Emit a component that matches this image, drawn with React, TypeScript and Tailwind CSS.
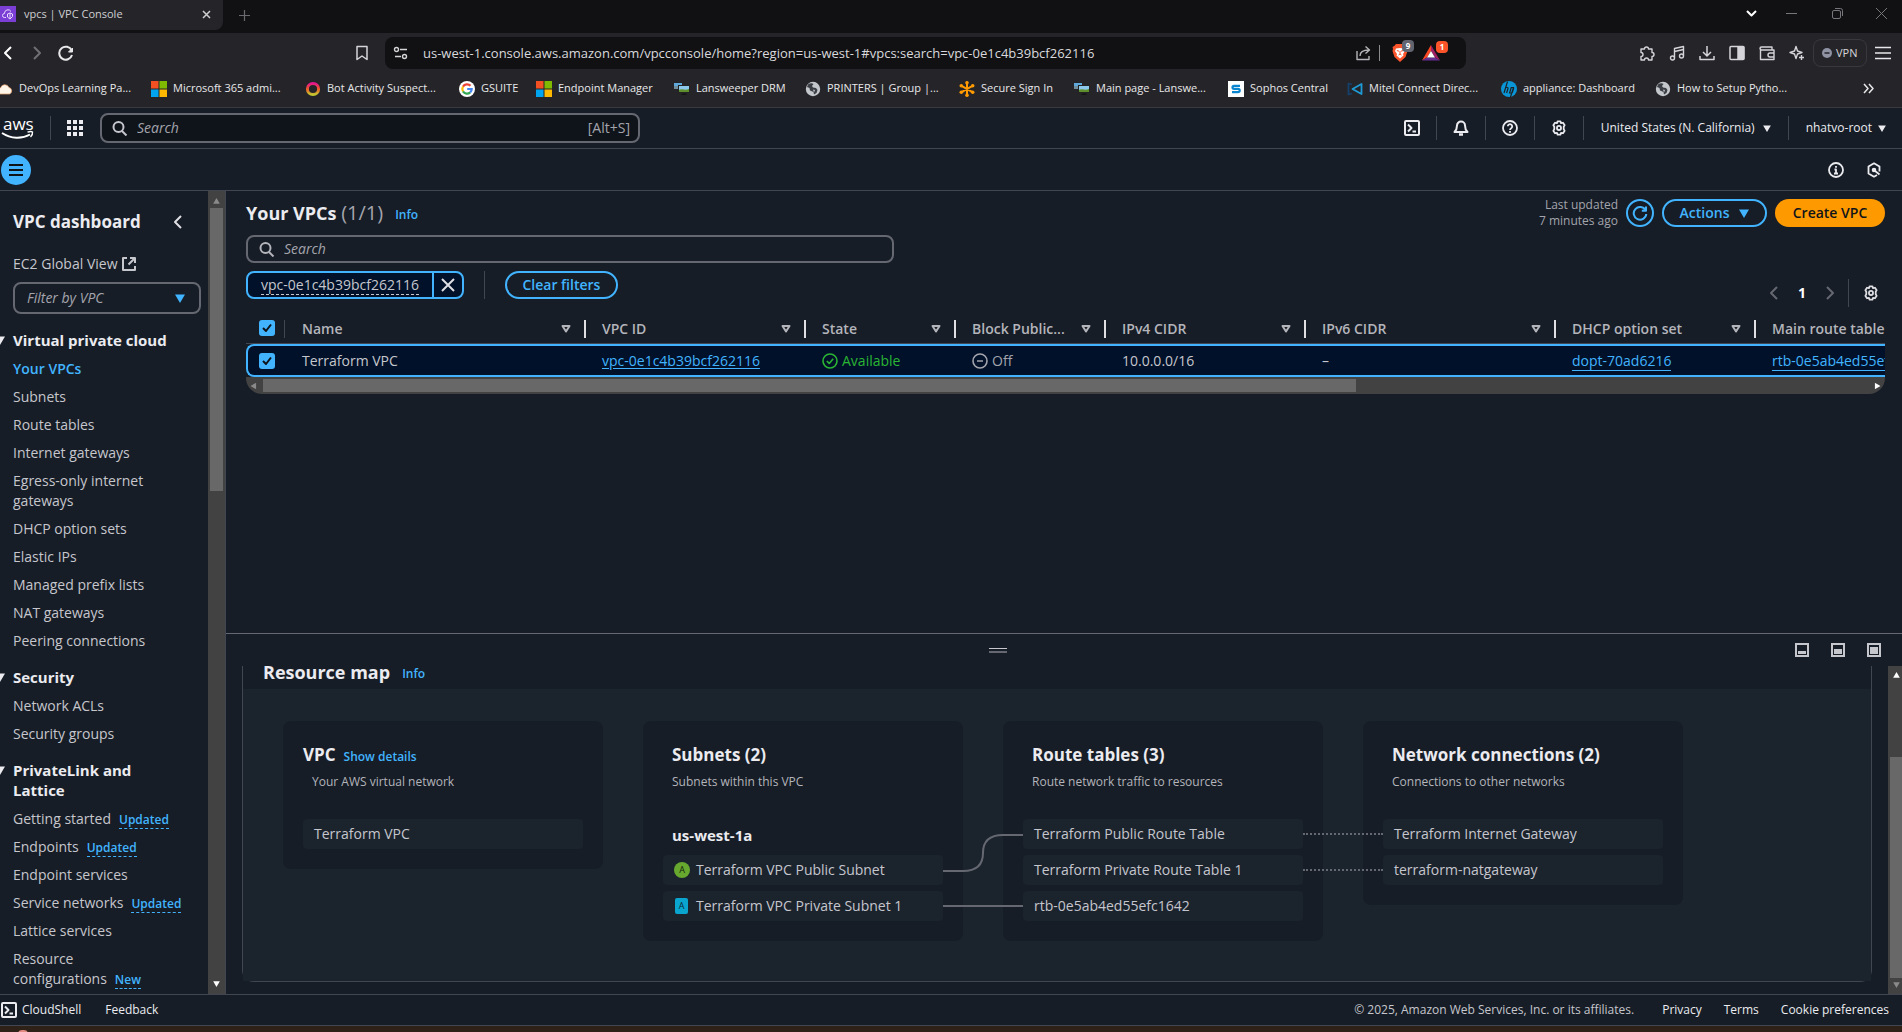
import type { ReactNode } from "react";

type P = { className?: string };

function Icon({ children, size = 16, className = "", box = "0 0 16 16", sw = 2 }: { children: ReactNode; size?: number; className?: string; box?: string; sw?: number }) {
  return (
    <svg width={size} height={size} viewBox={box} fill="none" stroke="currentColor" strokeWidth={sw} strokeLinejoin="round" className={"shrink-0 " + className} aria-hidden="true">
      {children}
    </svg>
  );
}

/* ---------- shared console icons ---------- */
const SearchIcon = ({ className }: P) => (
  <Icon className={className}><circle cx="6.5" cy="7" r="5" /><path d="m10 11 4.500 4.500" /></Icon>
);
const GearIcon = ({ className }: P) => (
  <Icon className={className} size={18} box="0 0 18 18">
    <path d="M7.400 1.500h3.200l.7 2.100 2.200-.5 1.900 2.700L14.300 7.600v2.800l1.100 1.800-1.900 2.700-2.200-.5-.7 2.100H7.400l-.7-2.100-2.200.5-1.900-2.700 1.100-1.800V7.600L2.600 5.800l1.900-2.700 2.200.5Z" />
    <circle cx="9" cy="9" r="2.3" />
  </Icon>
);
const ShellIcon = ({ className }: P) => (
  <Icon className={className}><rect x="1" y="1" width="14" height="14" rx="1" /><path d="m4 4.500 3.500 3.500L4 11.500M8.500 11.500H12" /></Icon>
);
const Caret = ({ className, w = 10 }: P & { w?: number }) => (
  <svg width={w} height={w - 1} viewBox="0 0 10 9" fill="currentColor" className={"shrink-0 " + className} aria-hidden="true"><path d="M0 .5h10L5 9Z" /></svg>
);
const SortIcon = () => (
  <Icon size={10} box="0 0 10 9" className="text-[#b4b4bb]"><path d="M1.5 1.500h7L5 7Z" /></Icon>
);
const ChevronLeft = ({ className }: P) => <Icon className={className}><path d="m11 2-6 6 6 6" /></Icon>;
const ChevronRight = ({ className }: P) => <Icon className={className}><path d="m5 2 6 6-6 6" /></Icon>;

/* ---------- bookmark icons ---------- */
const Microsoft = () => (
  <svg width="16" height="16" viewBox="0 0 16 16" className="shrink-0"><path fill="#f25022" d="M0 0h7.500v7.500H0z" /><path fill="#7fba00" d="M8.500 0H16v7.500H8.500z" /><path fill="#00a4ef" d="M0 8.500h7.500V16H0z" /><path fill="#ffb900" d="M8.500 8.500H16V16H8.500z" /></svg>
);
const Globe = () => (
  <svg width="16" height="16" viewBox="0 0 16 16" className="shrink-0"><circle cx="8" cy="8" r="7.2" fill="#c4c7cc" /><path d="M3 3.500c2-1.600 4.500-1.500 5.500-.5L7 5l1 1.500 3 .5 1.500 2-1 3-2.500 1.500L8.500 11 5 9.500 4.500 7 2 6Z" fill="#3b3e44" /><path d="M8 8.500 10 9l-1 2.500Z" fill="#c4c7cc" /></svg>
);
const Lansweeper = () => (
  <svg width="16" height="16" viewBox="0 0 16 16" className="shrink-0"><rect x="0" y="2" width="8" height="6" fill="#6f8d9c" /><path d="M0 2h8v3H0z" fill="#5fa8dc" /><rect x="4" y="4" width="11.500" height="8" fill="#222" /><rect x="5" y="5" width="10" height="4" fill="#8cc8ec" /><path d="M5 9c3-2 6 1 10-1v3H5z" fill="#5f8f2c" /><path d="M8 12.500h4l1 1.500H7z" fill="#151515" /></svg>
);
const Cloud = () => (
  <svg width="16" height="16" viewBox="0 0 16 16" className="shrink-0"><path d="M3 13a3 3 0 0 1 .5-6A4.500 4.500 0 0 1 12 6.500 3.400 3.400 0 0 1 12.500 13Z" fill="#fff4e8" stroke="#e8a06a" strokeWidth=".7" /></svg>
);
const Ring = () => (
  <svg width="16" height="16" viewBox="0 0 16 16" className="shrink-0"><defs><linearGradient id="ring" x1="0" y1="0" x2="0" y2="1"><stop offset="0" stopColor="#e5168c" /><stop offset=".5" stopColor="#f05a28" /><stop offset="1" stopColor="#c3c72e" /></linearGradient></defs><circle cx="8" cy="8" r="5.600" fill="none" stroke="url(#ring)" strokeWidth="3" /></svg>
);
const Google = () => (
  <svg width="16" height="16" viewBox="0 0 16 16" className="shrink-0"><circle cx="8" cy="8" r="8" fill="#fff" /><g fill="none" strokeWidth="2.200"><path d="M11.500 4.800A4.700 4.700 0 0 0 4 5.600" stroke="#ea4335" /><path d="M4 5.600a4.700 4.700 0 0 0 0 4.800" stroke="#fbbc05" /><path d="M4 10.400a4.700 4.700 0 0 0 7.200 1" stroke="#34a853" /><path d="M11.200 11.400A4.700 4.700 0 0 0 12.700 8H8.200" stroke="#4285f4" /></g></svg>
);
const Asterisk = () => (
  <svg width="16" height="16" viewBox="0 0 16 16" className="shrink-0"><g stroke="#ff9a00" strokeWidth="2" strokeLinecap="round"><path d="M8 1.500v13M2.500 4.800l11 6.400M13.500 4.800l-11 6.400" /></g><g fill="#ff9a00"><circle cx="8" cy="1.800" r="1.800" /><circle cx="8" cy="14.200" r="1.800" /><circle cx="2.300" cy="4.700" r="1.800" /><circle cx="13.700" cy="4.700" r="1.800" /><circle cx="2.300" cy="11.300" r="1.800" /><circle cx="13.700" cy="11.300" r="1.800" /></g></svg>
);
const Sophos = () => (
  <svg width="16" height="16" viewBox="0 0 16 16" className="shrink-0"><path fill="#fff" d="M0 0h16v16H0z" /><path d="M12 4.800H6a1.500 1.500 0 0 0 0 3h4a1.600 1.600 0 0 1 0 3.400H4" fill="none" stroke="#0a86d1" strokeWidth="2.200" /></svg>
);
const Mitel = () => (
  <svg width="16" height="16" viewBox="0 0 16 16" className="shrink-0" fill="none" strokeWidth="1.800" strokeLinejoin="round"><path d="M5 3.500 1.500 2.500v11L5 12.500" stroke="#14406b" /><path d="M14.500 3v10L5.500 8Z" stroke="#1e9bd7" /></svg>
);
const Hp = () => (
  <svg width="16" height="16" viewBox="0 0 16 16" className="shrink-0"><circle cx="8" cy="8" r="8" fill="#0a96d6" /><g stroke="#1d2226" strokeWidth="1.200" fill="none"><path d="M6.500.5 3 12M4.500 6.500h1.800q1 0 .7 1L5.600 12M9.500 16l3-9.500h-2.300L8.600 12h1.800q.8 0 1.100-1l1.200-4" /></g></svg>
);

const bookmarks: { t: string; i: () => ReactNode; w: string }[] = [
  { t: "DevOps Learning Pa...", i: Cloud, w: "w-[154px]" },
  { t: "Microsoft 365 admi...", i: Microsoft, w: "w-[154px]" },
  { t: "Bot Activity Suspect...", i: Ring, w: "w-[154px]" },
  { t: "GSUITE", i: Google, w: "w-[77px]" },
  { t: "Endpoint Manager", i: Microsoft, w: "w-[138px]" },
  { t: "Lansweeper DRM", i: Lansweeper, w: "w-[131px]" },
  { t: "PRINTERS | Group |...", i: Globe, w: "w-[154px]" },
  { t: "Secure Sign In", i: Asterisk, w: "w-[115px]" },
  { t: "Main page - Lanswe...", i: Lansweeper, w: "w-[154px]" },
  { t: "Sophos Central", i: Sophos, w: "w-[119px]" },
  { t: "Mitel Connect Direc...", i: Mitel, w: "w-[154px]" },
  { t: "appliance: Dashboard", i: Hp, w: "w-[154px]" },
  { t: "How to Setup Pytho...", i: Globe, w: "w-[154px]" },
];

const box30 = "grid w-[30px] shrink-0 place-items-center text-[#d5d5d9]";

function BrowserChrome() {
  return (
    <div className="shrink-0 bg-[#252529] text-[#e8e8ea]">
      <div className="flex h-[33px] items-start justify-between bg-[#111113]">
        <div className="flex items-center">
          <div className="flex h-[30px] w-[223px] items-center gap-2 rounded-br-lg bg-[#252529] pr-2 pb-[2px] text-[11px] text-[#cfcfd2]">
            <svg width="16" height="16" viewBox="0 0 16 16" className="shrink-0"><path fill="#7b3fd6" d="M0 0h16v16H0z" /><path d="M6 11.500H4.500a2 2 0 0 1 0-4A3.500 3.500 0 0 1 11 5.500M7.500 8l2.500-1 2.500 1v2.500L10 13l-2.500-2ZM10 7v5" stroke="#e9dcff" fill="none" /></svg>
            <span className="flex-1">vpcs | VPC Console</span>
            <button aria-label="Close tab" className="p-1"><Icon size={9} box="0 0 9 9" sw={1.5}><path d="m1 1 7 7M8 1 1 8" /></Icon></button>
          </div>
          <button aria-label="New tab" className="px-4 text-[#6a6a6e]"><Icon size={11} box="0 0 11 11" sw={1.2}><path d="M5.500 0v11M0 5.500h11" /></Icon></button>
        </div>
        <div className="flex h-[26px] items-center text-[#77777b]">
          <button aria-label="Search tabs" className="grid w-[34px] place-items-center text-white"><Icon size={11} box="0 0 11 11"><path d="m1 3 4.500 4.500L10 3" /></Icon></button>
          <button aria-label="Minimize" className="grid w-[46px] place-items-center"><Icon size={11} box="0 0 11 11" sw={1}><path d="M0 5.500h11" /></Icon></button>
          <button aria-label="Restore" className="grid w-[46px] place-items-center"><Icon size={11} box="0 0 11 11" sw={1}><rect x=".5" y="2.500" width="8" height="8" rx="1.500" /><path d="M3 .5h5.500a2 2 0 0 1 2 2V8" /></Icon></button>
          <button aria-label="Close" className="grid w-[42px] place-items-center"><Icon size={11} box="0 0 11 11" sw={1}><path d="m0 0 11 11M11 0 0 11" /></Icon></button>
        </div>
      </div>

      <div className="flex h-10 items-center">
        <div className="flex w-[346px] shrink-0">
          <button aria-label="Back" className="w-[29px]"><ChevronLeft className="text-white" /></button>
          <button aria-label="Forward" className="w-[29px]"><ChevronRight className="text-[#6f6f74]" /></button>
          <button aria-label="Reload" className="w-[20px]"><Icon><path d="M13.700 5.500A6.500 6.500 0 1 0 14 10" /><path d="M14.500 3v4h-4Z" fill="currentColor" strokeWidth="1" /></Icon></button>
        </div>
        <button aria-label="Bookmark this page" className="w-[39px] pl-2 text-[#d5d5d9]"><Icon sw={1.5}><path d="M3 1.500h10v13L8 11l-5 3.500Z" /></Icon></button>
        <div className="flex h-8 min-w-0 flex-1 items-center rounded-lg bg-[#111113] pl-2">
          <Icon sw={1.4} className="text-[#d5d5d9]"><circle cx="3.500" cy="4.500" r="2" /><path d="M7 4.500h7M2 11.500h6" /><circle cx="11.500" cy="11.500" r="2" /></Icon>
          <label htmlFor="url" className="sr-only">Address</label>
          <input id="url" readOnly className="ml-[14px] h-6 min-w-0 flex-1 bg-transparent text-[13px] text-[#d9d9dd]" value="us-west-1.console.aws.amazon.com/vpcconsole/home?region=us-west-1#vpcs:search=vpc-0e1c4b39bcf262116" />
          <button aria-label="Share" className="text-[#b5b5ba]"><Icon sw={1.4}><path d="M2 6v8.500h12V11" /><path d="M5 11c0-4 3-6 9-6M10.500 1.500 14.500 5l-4 3.500" /></Icon></button>
          <span className="mx-2 h-4 w-px bg-[#8c8c90]" />
          <button aria-label="Brave Shields" className="relative w-[34px] pl-1">
            <svg width="16" height="18" viewBox="0 0 16 18"><path d="M4 0h8l1.500 1.700L15.500 3 15 5l.5 2-2 6L8 18l-5.500-5L.5 7 1 5 .5 3l2-1.300Z" fill="#fb542b" /><path d="M4 4.500 8 4l4 .5 1 2.500-2 3 .5 1.500L8 14.500 4.500 11.500 5 10 3 7Z" fill="#fff" /><path d="M4.800 6.500 7 7.200M11.200 6.500 9 7.200M8 7v3M6.500 11 8 10l1.500 1" stroke="#fb542b" strokeWidth="1" fill="none" /></svg>
            <span className="absolute -top-1 left-[14px] grid size-3 place-items-center rounded bg-[#62656f] text-[8px] leading-none font-bold text-white">9</span>
          </button>
          <button aria-label="Brave Rewards" className="relative mr-5 w-[24px]">
            <svg width="18" height="16" viewBox="0 0 18 16"><path d="M9 0 0 15.500 5 12.500 9 6Z" fill="#ff4724" /><path d="M9 0v6l4 6.500 5 3Z" fill="#9e1f63" /><path d="m0 15.500 5-3h8l5 3Z" fill="#662d91" /><path d="M9 6 5 12.500h8Z" fill="#fff" /></svg>
            <span className="absolute -top-1 left-[14px] grid size-3 place-items-center rounded bg-[#fb542b] text-[8px] leading-none font-bold text-white">1</span>
          </button>
        </div>
        <div className="ml-[166px] flex items-center">
          <button aria-label="Extensions" className={box30}><Icon sw={1.4}><path d="M2 4h3.500a2 2 0 1 1 4 0H13v3.500a2 2 0 1 1 0 4V15H9.500a2 2 0 0 0-4 0H2v-3.500a2 2 0 0 0 0-4Z" /></Icon></button>
          <button aria-label="Media" className={box30}><Icon sw={1.4}><path d="M5.500 12.500v-9l9-2v9" /><path d="M5.500 6.500l9-2" /><circle cx="3.500" cy="13" r="2" /><circle cx="12.500" cy="11" r="2" /></Icon></button>
          <button aria-label="Downloads" className={box30}><Icon sw={1.5}><path d="M8 1v9.500M4 7l4 4 4-4M1 11v3.500h14V11" /></Icon></button>
          <button aria-label="Sidebar" className={box30}><Icon sw={1.5}><rect x="1" y="1.500" width="14" height="13" rx="1" /><path d="M9 2h5.500v12H9Z" fill="currentColor" /></Icon></button>
          <button aria-label="Wallet" className={box30}><Icon sw={1.4}><path d="M13 5V2H2.500a1.200 1.200 0 0 0 0 3H15v9.500H1.500v-11M15 8h-4a2 2 0 0 0 0 4h4" /></Icon></button>
          <button aria-label="Leo AI" className={box30}><Icon sw={1.4}><path d="M7 1.500 8.500 6 13 7.500 8.500 9 7 13.500 5.500 9 1 7.500 5.500 6Z" /><path d="M12.500 10v5M10 12.500h5" /></Icon></button>
          <button className="ml-px flex h-7 w-[54px] items-center gap-1 rounded-lg border border-[#38383d] pl-2 text-[11px] text-[#d5d5d9]">
            <svg width="10" height="10" viewBox="0 0 10 10"><circle cx="5" cy="5" r="5" fill="#8f93a3" /><path d="M2.500 5h5" stroke="#252529" strokeWidth="1.500" /></svg>VPN
          </button>
          <button aria-label="Menu" className="mr-[11px] ml-2"><Icon><path d="M0 2.500h16M0 8h16M0 13.500h16" strokeWidth="1.500" /></Icon></button>
        </div>
      </div>

      <nav aria-label="Bookmarks" className="flex h-[35px] items-center justify-between overflow-hidden border-b border-[#3a3a3e] pb-[3px] text-[11px]">
        <div className="-ml-[3px] flex h-6 min-w-0 overflow-hidden">
          {bookmarks.map((b) => (
            <a key={b.t} href="#" className={"flex shrink-0 items-center gap-[6px] whitespace-nowrap " + b.w}><b.i />{b.t}</a>
          ))}
        </div>
        <button aria-label="More bookmarks" className="mr-7"><Icon size={11} box="0 0 11 11" sw={1.5}><path d="m1 1 4 4.500L1 10M6 1l4 4.500L6 10" /></Icon></button>
      </nav>
    </div>
  );
}

const divider = <span className="h-6 w-px shrink-0 bg-[#424650]" />;

function ConsoleHeader() {
  return (
    <header className="shrink-0 text-[#ebebf0]">
      <div className="flex h-[41px] items-center border-b border-[#424650]">
        <a href="#" aria-label="AWS home" className="w-[50px]">
          <svg width="36" height="30" viewBox="0 0 36 30" fill="#fff"><text x="3" y="17" fontFamily="Open Sans" fontWeight="500" fontSize="17">aws</text><path d="M2 20c9 6 20 6 28 1.500" fill="none" stroke="#fff" strokeWidth="2" /><path d="M27.500 19.200c2-.8 4-1 5-.2.300 1.500-.5 3.500-2 5" fill="none" stroke="#fff" strokeWidth="1.400" /></svg>
        </a>
        {divider}
        <button aria-label="Services" className="px-4">
          <svg width="16" height="16" viewBox="0 0 16 16" fill="#ebebf0"><path d="M0 0h4v4H0zM6 0h4v4H6zM12 0h4v4h-4zM0 6h4v4H0zM6 6h4v4H6zM12 6h4v4h-4zM0 12h4v4H0zM6 12h4v4H6zM12 12h4v4h-4z" /></svg>
        </button>
        <div className="ml-px flex h-[30px] w-[540px] items-center rounded-lg border-2 border-[#656871] bg-[#0f141a] pr-2 pl-[10px] text-sm text-[#a4a4ad]">
          <SearchIcon className="text-[#c6c6cd]" />
          <input aria-label="Search services" placeholder="Search" className="ml-[9px] min-w-0 flex-1 bg-transparent placeholder:text-[#a4a4ad] placeholder:italic" />
          <span>[Alt+S]</span>
        </div>
        <div className="ml-auto flex h-full items-center text-xs">
          <button aria-label="CloudShell" className="px-4"><ShellIcon /></button>
          {divider}
          <button aria-label="Notifications" className="px-4"><Icon><path d="M8 1.500a4 4 0 0 0-4 4c0 3-1 5-2.500 6.500h13C13 10.500 12 8.500 12 5.500a4 4 0 0 0-4-4Z" /><path d="M6 14.500h4" strokeWidth="2.500" /></Icon></button>
          {divider}
          <button aria-label="Help" className="px-4"><Icon sw={1.8}><circle cx="8" cy="8" r="7" /><path d="M5.800 6.300a2.200 2.200 0 1 1 3.400 1.900Q8 9 8 10M8 11v1.800" /></Icon></button>
          {divider}
          <button aria-label="Settings" className="px-4"><GearIcon className="w-4" /></button>
          {divider}
          <button className="flex items-center gap-2 px-[17px] whitespace-nowrap">United States (N. California) <Caret w={8} /></button>
          {divider}
          <button className="flex items-center gap-[6px] pr-4 pl-[17px] whitespace-nowrap">nhatvo-root <Caret w={8} /></button>
        </div>
      </div>
      <div className="flex h-[42px] items-center justify-between border-b border-[#424650]">
        <button aria-label="Open navigation" className="ml-px grid size-[30px] place-items-center rounded-full bg-[#42b4ff] text-[#0f141a]">
          <Icon size={14} box="0 0 14 14"><path d="M0 2h14M0 7h14M0 12h14" /></Icon>
        </button>
        <div className="flex gap-[22px] pr-5">
          <button aria-label="Info panel"><Icon sw={1.8}><circle cx="8" cy="8" r="7" /><path d="M8 4v1.800M6.500 7.500H8v4M6 11.500h4" /></Icon></button>
          <button aria-label="Diagnostics"><Icon sw={1.8}><path d="M13.500 9.500V4.600L8 1.300 2.500 4.600v6.800L8 14.700l3-1.800" /><path d="m8.500 8.500 5 4" /><circle cx="8" cy="8" r="1.400" fill="currentColor" /></Icon></button>
        </div>
      </div>
    </header>
  );
}

const sections: { title: string; items: [string, string?][] }[] = [
  { title: "Virtual private cloud", items: [["Your VPCs"], ["Subnets"], ["Route tables"], ["Internet gateways"], ["Egress-only internet gateways"], ["DHCP option sets"], ["Elastic IPs"], ["Managed prefix lists"], ["NAT gateways"], ["Peering connections"]] },
  { title: "Security", items: [["Network ACLs"], ["Security groups"]] },
  { title: "PrivateLink and Lattice", items: [["Getting started", "Updated"], ["Endpoints", "Updated"], ["Endpoint services"], ["Service networks", "Updated"], ["Lattice services"], ["Resource configurations", "New"]] },
];

function Sidebar() {
  return (
    <aside className="flex w-[226px] shrink-0 border-r border-[#424650]">
      <nav aria-label="VPC" className="min-w-0 flex-1 overflow-hidden pl-[13px] text-sm text-[#c6c6cd]">
        <div className="mt-[19px] flex h-6 items-center justify-between pr-[22px]">
          <h2 className="text-[17px] font-bold text-[#ebebf0]">VPC dashboard</h2>
          <button aria-label="Close navigation"><ChevronLeft className="text-[#dedee3]" /></button>
        </div>
        <a href="#" className="mt-5 flex h-5 items-center gap-1">EC2 Global View
          <Icon><path d="M6 2H2v12h12v-4" /><path d="M9 2h5v5M14 2 7.500 8.500" /></Icon>
        </a>
        <div className="relative mt-2 mr-[7px]">
          <select aria-label="Filter by VPC" className="h-8 w-full appearance-none rounded-lg border-2 border-[#656871] pl-3 text-[#a4a4ad] italic"><option>Filter by VPC</option></select>
          <Caret className="pointer-events-none absolute top-3 right-4 text-[#42b4ff]" />
        </div>
        {sections.map((s) => (
          <section key={s.title} className="mt-4">
            <h3 className="relative pr-8 text-[15px] leading-5 font-bold text-[#ebebf0]">
              <Caret className="absolute top-[6px] -left-[18px]" />{s.title}
            </h3>
            <ul className="mt-[9px] flex flex-col gap-2">
              {s.items.map(([t, tag]) => (
                <li key={t} className="pr-10 leading-5 has-[em]:pr-3">
                  <a href="#" className={t === "Your VPCs" ? "font-semibold text-[#42b4ff]" : ""}>
                    {t === "Resource configurations" ? <><span className="block">Resource</span>configurations</> : t}
                  </a>
                  {tag && <em className="ml-2 inline-block border-b border-dashed border-[#42b4ff] text-xs leading-4 font-semibold text-[#42b4ff] not-italic">{tag}</em>}
                </li>
              ))}
            </ul>
          </section>
        ))}
      </nav>
      <div className="flex w-[17px] flex-col items-center bg-[#424242] py-[7px]">
        <Caret w={7} className="rotate-180 text-[#8a8a8a]" />
        <div className="mt-1 h-[283px] w-[13px] bg-[#686868]" />
        <Caret w={7} className="mt-auto text-white" />
      </div>
    </aside>
  );
}

const btn = "h-7 rounded-full border-2 border-[#42b4ff] text-sm font-semibold text-[#42b4ff] flex items-center justify-center";

function Check({ label }: { label: string }) {
  return (
    <span className="grid size-4">
      <input type="checkbox" defaultChecked aria-label={label} className="size-4 appearance-none rounded-[3px] bg-[#42b4ff] [grid-area:1/1]" />
      <Icon className="pointer-events-none text-[#0f141a] [grid-area:1/1]"><path d="m4 8 3 3 5-6.500" /></Icon>
    </span>
  );
}

const columns: [string, string][] = [
  ["Name", "w-[300px]"], ["VPC ID", "w-[220px]"], ["State", "w-[150px]"], ["Block Public...", "w-[150px]"],
  ["IPv4 CIDR", "w-[200px]"], ["IPv6 CIDR", "w-[250px]"], ["DHCP option set", "w-[200px]"], ["Main route table", "w-[250px]"],
];

function VpcTable() {
  const td = "h-[33px] border-y-2 border-[#42b4ff] bg-[#001129] pl-4 whitespace-nowrap";
  return (
    <div className="mt-2 overflow-hidden rounded-b-2xl">
      <table className="w-[1760px] table-fixed border-separate border-spacing-0 text-left text-sm text-[#c6c6cd]">
        <thead>
          <tr>
            <th className="h-[29px] w-10 border-b border-[#424650] pl-[13px]">
              <div className="flex h-[18px] justify-between"><Check label="Select all VPCs" /><span className="mr-px w-px bg-[#424650]" /></div>
            </th>
            {columns.map(([c, w]) => (
              <th key={c} className={"border-b border-[#424650] pl-4 font-semibold text-[#b4b4bb] " + w}>
                <div className="flex h-[18px] items-center">
                  <span className="flex-1 whitespace-nowrap">{c}</span>
                  <SortIcon />
                  <span className="ml-[13px] h-[18px] w-[2px] bg-[#dedee3]" />
                </div>
              </th>
            ))}
          </tr>
        </thead>
        <tbody>
          <tr>
            <td className="rounded-l-lg border-2 border-r-0 border-[#42b4ff] bg-[#001129] pl-[11px]"><Check label="Select Terraform VPC" /></td>
            <td className={td}>Terraform VPC</td>
            <td className={td}><a href="#" className="text-[#42b4ff] underline underline-offset-2">vpc-0e1c4b39bcf262116</a></td>
            <td className={td}><span className="flex items-center gap-1 text-[#2bb534]"><Icon sw={1.6}><circle cx="8" cy="8" r="7" /><path d="m4.800 8 2.400 2.400 4-4.600" /></Icon>Available</span></td>
            <td className={td}><span className="flex items-center gap-1 text-[#a4a4ad]"><Icon sw={1.6}><circle cx="8" cy="8" r="7" /><path d="M5 8h6" /></Icon>Off</span></td>
            <td className={td}>10.0.0.0/16</td>
            <td className={td}>–</td>
            <td className={td}><a href="#" className="border-b border-[#42b4ff] text-[#42b4ff]">dopt-70ad6216</a></td>
            <td className={td}><a href="#" className="border-b border-[#42b4ff] text-[#42b4ff]">rtb-0e5ab4ed55efc1642</a></td>
          </tr>
        </tbody>
      </table>
      <div className="flex h-[17px] items-center justify-between bg-[#424242] px-1">
        <Caret w={7} className="rotate-90 text-[#8a8a8a]" />
        <div className="mr-auto ml-[6px] h-[13px] w-[67%] bg-[#686868]" />
        <Caret w={7} className="-rotate-90 text-white" />
      </div>
    </div>
  );
}

function VpcList() {
  return (
    <section className="min-h-0 flex-1 pt-2 pr-[17px] pl-5">
      <div className="flex h-7 items-center">
        <h1 className="text-lg font-bold text-[#ebebf0]">Your VPCs <span className="text-xl font-normal text-[#a4a4ad]">(1/1)</span></h1>
        <a href="#" className="mt-1 ml-3 text-xs font-semibold text-[#42b4ff]">Info</a>
        <div className="ml-auto flex items-center gap-2">
          <p className="text-right text-xs leading-4 text-[#a4a4ad]">Last updated<br />7 minutes ago</p>
          <button aria-label="Refresh" className={btn + " w-7"}><Icon><path d="M13.500 5.200A6.300 6.300 0 1 0 14.300 9M14 1.500v4.300H9.800" /></Icon></button>
          <button className={btn + " w-[105px] gap-[10px]"}>Actions <Caret /></button>
          <button className="h-7 w-[110px] rounded-full bg-[#ff9900] text-sm font-semibold text-[#0f141a]">Create VPC</button>
        </div>
      </div>
      <div className="mt-2 flex h-7 w-[648px] items-center rounded-lg border-2 border-[#656871] pl-[11px]">
        <SearchIcon className="text-[#b4b4bb]" />
        <input aria-label="Search VPCs" placeholder="Search" className="ml-[9px] flex-1 bg-transparent text-sm placeholder:text-[#a4a4ad] placeholder:italic" />
      </div>
      <div className="mt-2 flex h-9 items-start">
        <div className="flex h-7 items-stretch rounded-lg border-2 border-[#42b4ff] bg-[#001129] text-sm text-[#c6c6cd]">
          <button className="px-[13px]"><span className="border-b border-dashed border-[#c6c6cd]">vpc-0e1c4b39bcf262116</span></button>
          <button aria-label="Remove filter" className="grid w-[30px] place-items-center border-l-2 border-[#42b4ff] text-[#dedee3]"><Icon><path d="m2 2 12 12M14 2 2 14" /></Icon></button>
        </div>
        <span className="mx-5 h-7 w-px bg-[#424650]" />
        <button className={btn + " w-[113px]"}>Clear filters</button>
        <div className="ml-auto flex h-7 items-center self-end text-[#656871]">
          <button aria-label="Previous page"><ChevronLeft /></button>
          <button className="w-10 text-sm font-bold text-white">1</button>
          <button aria-label="Next page"><ChevronRight /></button>
          <span className="mr-[14px] ml-[10px] h-7 w-px bg-[#424650]" />
          <button aria-label="Preferences" className="mr-[6px]"><GearIcon className="w-4 text-[#dedee3]" /></button>
        </div>
      </div>
      <VpcTable />
    </section>
  );
}

const line = "absolute left-full w-20";

function MapItem({ children, mark, link }: { children: ReactNode; mark?: ReactNode; link?: ReactNode }) {
  return (
    <li className="relative flex h-[30px] items-center gap-[6px] rounded-sm bg-[#1b232d] px-[11px] text-sm whitespace-nowrap text-[#c6c6cd]">
      {mark}{children}{link}
    </li>
  );
}

function MapCard({ title, sub, extra, zone, children, inset = true }: { title: string; sub: string; extra?: ReactNode; zone?: string; children: ReactNode; inset?: boolean }) {
  return (
    <article className="w-80 shrink-0 rounded-lg bg-[#161d26] p-5">
      <h3 className={"flex h-7 items-center gap-2 text-[17px] font-bold text-[#ebebf0] " + (inset ? "pl-[9px]" : "")}>{title}{extra}</h3>
      <p className="mt-[5px] pl-[9px] text-xs leading-4 text-[#b4b4bb]">{sub}</p>
      <div className="mt-[29px]">
        {zone && <h4 className="h-9 pl-[9px] text-[15px] leading-8 font-bold text-[#ebebf0]">{zone}</h4>}
        <ul className="flex flex-col gap-[6px]">{children}</ul>
      </div>
    </article>
  );
}

const panelSizes: [string, number][] = [["Small panel", 8], ["Medium panel", 6], ["Full panel", 4]];

function ResourceMap() {
  return (
    <section className="flex h-[361px] shrink-0 flex-col border-t border-[#656871]">
      <div className="flex h-8 shrink-0 items-center">
        <div className="flex-1" />
        <div className="mr-[111px] flex w-[18px] flex-col gap-[2px]" role="separator" aria-label="Resize panel"><span className="h-px bg-[#c6c6cd]" /><span className="h-[2px] bg-[#656871]" /></div>
        <div className="flex flex-1 justify-end gap-[22px] pr-[21px] text-[#c6c6cd]">
          {panelSizes.map(([name, y]) => (
            <button key={name} aria-label={name}><svg width="14" height="14" viewBox="0 0 14 14"><path d="M1 1h12v12H1z" fill="none" stroke="currentColor" strokeWidth="2" /><rect x="3" y={y} width="8" height={11 - y} fill="currentColor" /></svg></button>
          ))}
        </div>
      </div>
      <div className="flex min-h-0 flex-1 justify-between">
        <div className="mr-4 ml-4 flex min-w-0 flex-1 flex-col overflow-hidden pb-3">
          <div className="flex min-h-0 flex-1 flex-col rounded-b-xl border border-t-0 border-[#424650]">
            <div className="flex h-[23px] shrink-0 items-center pb-3 pl-5">
              <h2 className="text-lg leading-5 font-bold text-[#ebebf0]">Resource map</h2>
              <a href="#" className="mt-1 ml-3 text-xs font-semibold text-[#42b4ff]">Info</a>
            </div>
            <div className="flex flex-1 items-start gap-10 overflow-hidden bg-[#1b232d] px-10 pt-8">
              <MapCard title="VPC" sub="Your AWS virtual network" inset={false} extra={<a href="#" className="mt-1 text-xs font-semibold text-[#42b4ff]">Show details</a>}>
                <MapItem>Terraform VPC</MapItem>
              </MapCard>
              <MapCard title="Subnets (2)" sub="Subnets within this VPC" zone="us-west-1a">
                <MapItem
                  mark={<span className="grid size-4 place-items-center rounded-full bg-[#67a82f] text-[9px] text-[#14220c]">A</span>}
                  link={<svg className={line + " bottom-[13px] h-[38px]"} viewBox="0 0 80 38" fill="none" stroke="#656871" strokeWidth="2"><path d="M0 37h20q20 0 20-18 0-18 20-18h20" /></svg>}
                >Terraform VPC Public Subnet</MapItem>
                <MapItem
                  mark={<span className="mr-[2px] ml-px grid h-4 w-[13px] place-items-center rounded-[2px] bg-[#0aa5cf] text-[9px] text-[#0b2a36]">A</span>}
                  link={<span className={line + " top-[14px] h-[2px] bg-[#656871]"} />}
                >Terraform VPC Private Subnet 1</MapItem>
              </MapCard>
              <MapCard title="Route tables (3)" sub="Route network traffic to resources">
                <MapItem link={<span className={line + " top-[14px] border-t-2 border-dotted border-[#656871]"} />}>Terraform Public Route Table</MapItem>
                <MapItem link={<span className={line + " top-[14px] border-t-2 border-dotted border-[#656871]"} />}>Terraform Private Route Table 1</MapItem>
                <MapItem>rtb-0e5ab4ed55efc1642</MapItem>
              </MapCard>
              <MapCard title="Network connections (2)" sub="Connections to other networks">
                <MapItem>Terraform Internet Gateway</MapItem>
                <MapItem>terraform-natgateway</MapItem>
              </MapCard>
            </div>
          </div>
        </div>
        <div className="flex w-[14px] flex-col items-end bg-[#424242] py-[6px]">
          <Caret w={7} className="mr-[2px] rotate-180 text-white" />
          <div className="mt-auto mb-1 h-[221px] w-3 bg-[#686868]" />
          <Caret w={7} className="mr-[2px] text-[#8a8a8a]" />
        </div>
      </div>
    </section>
  );
}

export default function App() {
  return (
    <div className="flex h-screen flex-col overflow-hidden bg-[#161d26] font-['Open_Sans','Noto_Sans',sans-serif]">
      <BrowserChrome />
      <ConsoleHeader />
      <div className="flex min-h-0 flex-1">
        <Sidebar />
        <main className="flex min-w-0 flex-1 flex-col">
          <VpcList />
          <ResourceMap />
        </main>
      </div>
      <footer className="flex h-8 shrink-0 items-center border-y border-[#424650] text-xs text-[#ebebf0]">
        <button className="ml-px flex items-center gap-[5px]"><ShellIcon />CloudShell</button>
        <a href="#" className="ml-6">Feedback</a>
        <span className="ml-auto text-[#c6c6cd]">© 2025, Amazon Web Services, Inc. or its affiliates.</span>
        <a href="#" className="ml-7">Privacy</a>
        <a href="#" className="ml-[22px]">Terms</a>
        <a href="#" className="mr-[13px] ml-[22px]">Cookie preferences</a>
      </footer>
      <div className="h-[6px] shrink-0 overflow-hidden bg-[#2e2218]">
        <div className="mt-1 ml-[18px] h-2 w-[10px] rounded-full bg-[#e08a80]" />
      </div>
    </div>
  );
}
